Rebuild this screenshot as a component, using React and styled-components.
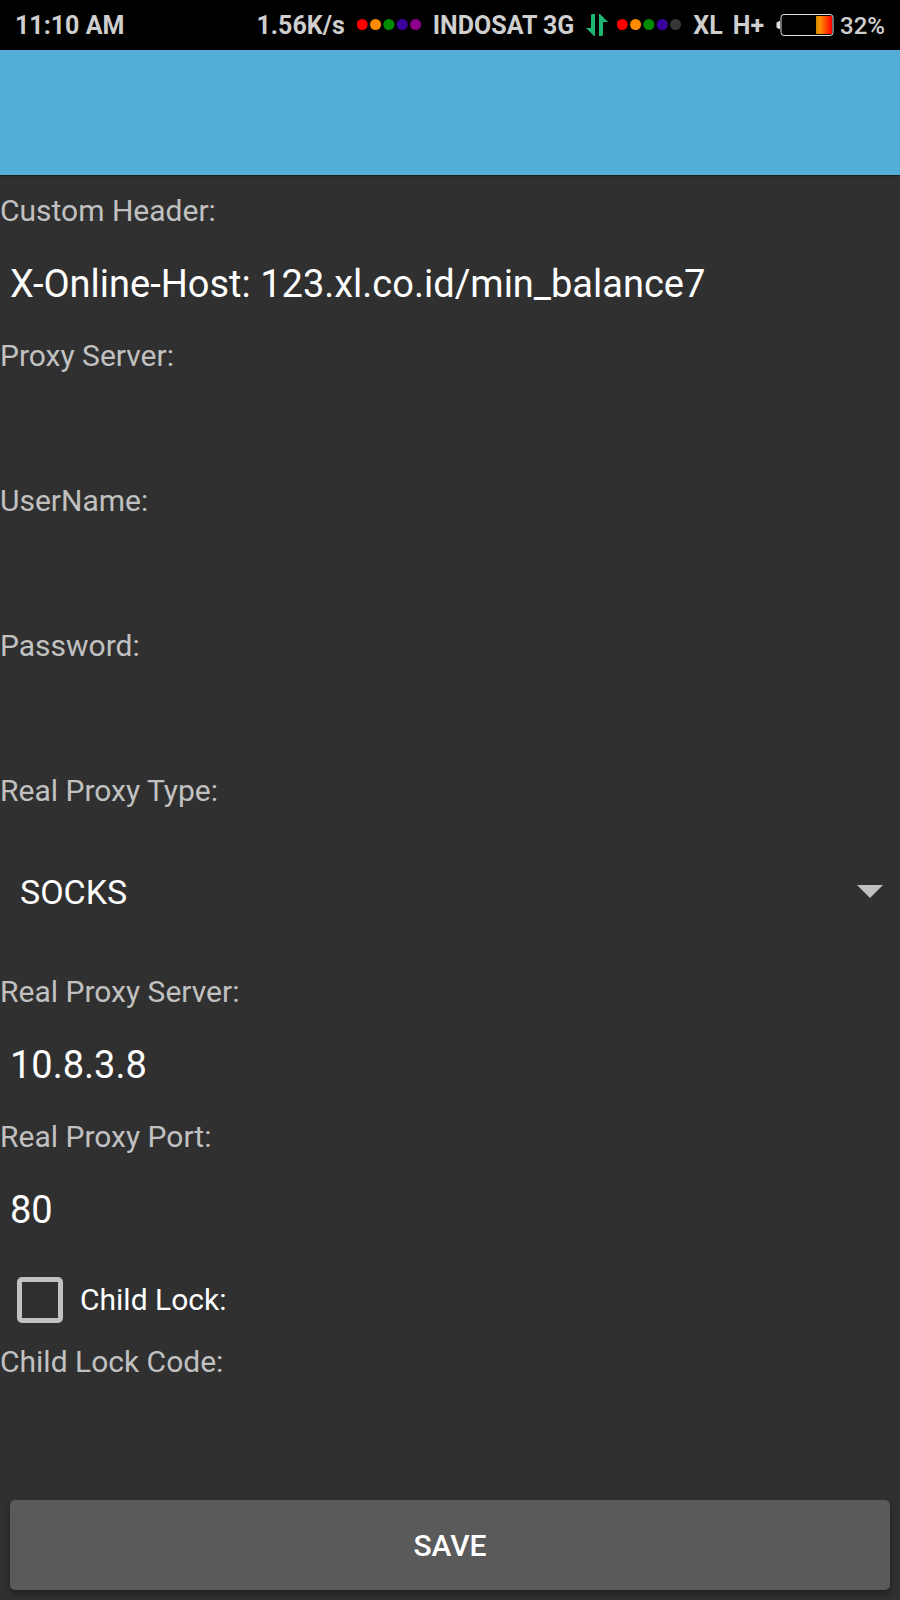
import { useState } from 'react'
import styled, { createGlobalStyle } from 'styled-components'

const GlobalStyle = createGlobalStyle`
	* {
		box-sizing: border-box;
	}
	body {
		margin: 0;
		background: #303030;
		font-family: Roboto, sans-serif;
	}
`

const Screen = styled.div`
	display: flex;
	flex-direction: column;
	min-height: 100vh;
	color: white;
`

const StatusBar = styled.header`
	display: flex;
	align-items: center;
	justify-content: space-between;
	height: 50px;
	padding: 0 15px;
	background: black;
	color: #cfcfcf;
	white-space: nowrap;
`

const StatusText = styled.span`
	padding-top: 2px;
	font-size: ${p => p.$small ? 24 : 25}px;
	line-height: 30px;
	font-weight: ${p => p.$small ? 500 : 700};
`

const StatusGroup = styled.div`
	display: flex;
	align-items: center;
	gap: ${p => p.$gap}px;
`

const TitleBar = styled.div`
	height: 125px;
	background: #52aed6;
	box-shadow: 0 1px 1px #1c1c1c;
`

const Form = styled.form`
	display: flex;
	flex-direction: column;
	flex: 1;
	padding-top: 19px;
`

const Label = styled.label`
	font-size: 30px;
	line-height: 34px;
	color: #c1c1c1;
`

const Input = styled.input`
	width: 100%;
	height: 111px;
	padding: 0 10px;
	border: none;
	outline: none;
	background: transparent;
	color: white;
	font-family: inherit;
	font-size: 38px;
`

const SelectBox = styled.div`
	position: relative;
	height: 167px;
`

const Select = styled.select`
	appearance: none;
	width: 100%;
	height: 100%;
	padding: 0 60px 0 20px;
	border: none;
	outline: none;
	background: transparent;
	color: white;
	font-family: inherit;
	font-size: 34px;
`

const SelectArrow = styled.svg`
	position: absolute;
	top: 50%;
	right: 17px;
	margin-top: -7px;
	pointer-events: none;
`

const CheckRow = styled.label`
	display: flex;
	align-items: center;
	gap: 17px;
	height: 70px;
	margin-bottom: 10px;
	padding-left: 17px;
	font-size: 30px;
	line-height: 34px;
`

const Checkbox = styled.input`
	appearance: none;
	width: 46px;
	height: 46px;
	margin: 0;
	border: 5px solid #c1c1c1;
	border-radius: 5px;
	&:checked {
		background: #c1c1c1;
	}
`

const SaveButton = styled.button`
	height: 90px;
	margin: 10px;
	padding-top: 2px;
	border: none;
	border-radius: 5px;
	background: #5a5a5b;
	box-shadow: 0 4px 6px rgba(0, 0, 0, 0.35);
	color: white;
	font-family: inherit;
	font-size: 30px;
	font-weight: 500;
`

const rainbow = ['#ff0000', '#ff8c00', '#008c00', '#3c009c', '#8c008c']
const weaker = [...rainbow.slice(0, 4), '#373737']

const SignalDots = ({ colors }) => (
	<svg width="64" height="12" viewBox="0 0 64 12">
		{colors.map((c, i) => (
			<circle key={c} cx={5.2 + i * 13.35} cy="5.5" r="5.5" fill={c} />
		))}
	</svg>
)

const DataArrows = () => (
	<svg width="23" height="22" viewBox="0 0 23 22" fill="#1fb573">
		<path d="M6 0H9V22H8L0 14H5V1Z" />
		<path d="M13 22V0H14L22 8H17V21L16 22Z" />
	</svg>
)

const BatteryIcon = () => (
	<svg width="58" height="22" viewBox="0 0 58 22">
		<defs>
			<linearGradient id="charge">
				<stop offset="0" stopColor="#c88a00" />
				<stop offset="0.25" stopColor="#ff9000" />
				<stop offset="1" stopColor="#ff0000" />
			</linearGradient>
		</defs>
		<path d="M4 7H3Q2 8 0.5 8.5V13.5Q2 14 3 15H4Z" fill="#e0e0e0" />
		<rect x="5" y="0.5" width="52" height="21" rx="3" fill="none" stroke="#e0e0e0" />
		<rect x="40" y="2" width="16" height="18" fill="url(#charge)" />
	</svg>
)

function Field({ id, label, type = 'text', value = '' }) {
	const [text, setText] = useState(value)

	return (
		<>
			<Label htmlFor={id}>{label}</Label>
			<Input id={id} type={type} value={text} onChange={e => setText(e.target.value)} />
		</>
	)
}

export default function App() {
	const [locked, setLocked] = useState(false)

	return (
		<Screen>
			<GlobalStyle />
			<StatusBar>
				<StatusText>11:10 AM</StatusText>
				<StatusGroup $gap={12}>
					<StatusText>1.56K/s</StatusText>
					<SignalDots colors={rainbow} />
					<StatusText>INDOSAT 3G</StatusText>
					<StatusGroup $gap={8}>
						<DataArrows />
						<SignalDots colors={weaker} />
					</StatusGroup>
					<StatusGroup $gap={10}>
						<StatusText>XL</StatusText>
						<StatusText>H+</StatusText>
					</StatusGroup>
					<StatusGroup $gap={6}>
						<BatteryIcon />
						<StatusText $small>32%</StatusText>
					</StatusGroup>
				</StatusGroup>
			</StatusBar>
			<TitleBar />
			<Form onSubmit={e => e.preventDefault()}>
				<Field id="header" label="Custom Header:" value="X-Online-Host: 123.xl.co.id/min_balance7" />
				<Field id="proxy" label="Proxy Server:" />
				<Field id="username" label="UserName:" />
				<Field id="password" label="Password:" type="password" />
				<Label htmlFor="proxy-type">Real Proxy Type:</Label>
				<SelectBox>
					<Select id="proxy-type">
						<option>SOCKS</option>
						<option>HTTP</option>
					</Select>
					<SelectArrow width="26" height="13" viewBox="0 0 26 13">
						<path d="M0 0H26L13 13Z" fill="#c1c1c1" />
					</SelectArrow>
				</SelectBox>
				<Field id="real-server" label="Real Proxy Server:" value="10.8.3.8" />
				<Field id="real-port" label="Real Proxy Port:" value="80" />
				<CheckRow>
					<Checkbox type="checkbox" checked={locked} onChange={e => setLocked(e.target.checked)} />
					Child Lock:
				</CheckRow>
				<Field id="lock-code" label="Child Lock Code:" />
				<SaveButton type="submit">SAVE</SaveButton>
			</Form>
		</Screen>
	)
}
